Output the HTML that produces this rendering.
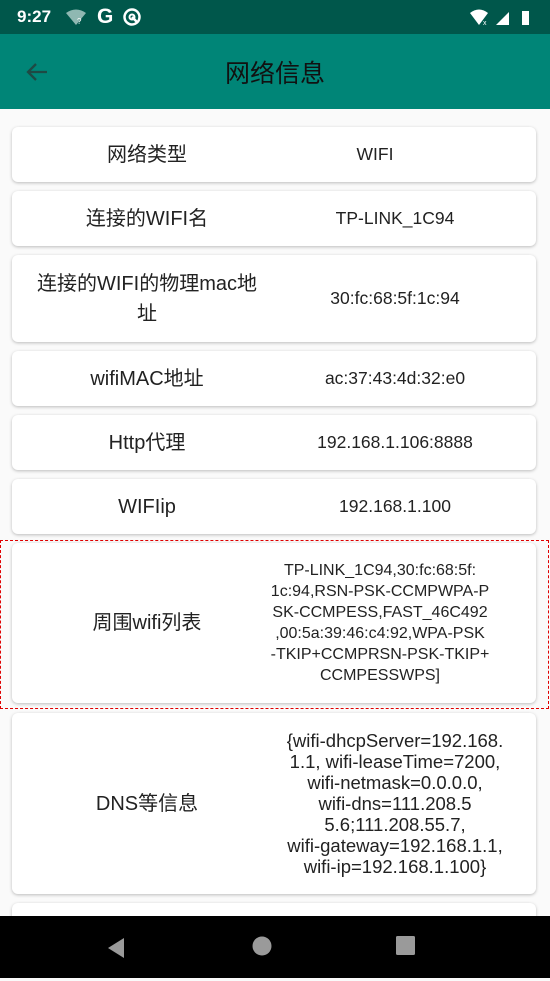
<!DOCTYPE html>
<html><head><meta charset="utf-8">
<style>
*{margin:0;padding:0;box-sizing:border-box}
body{width:550px;height:981px;overflow:hidden;background:#fafafa;font-family:"Liberation Sans","Noto Sans CJK SC",sans-serif;color:#222;position:relative}
.sb{position:absolute;left:0;top:0;width:550px;height:34px;background:#00574b;color:#fff}
.ab{position:absolute;left:0;top:34px;width:550px;height:75px;background:#008577}
.title{position:absolute;left:0;width:550px;top:20px;text-align:center;font-size:25px;color:#111}
.card{position:absolute;left:12px;width:524px;background:#fff;border-radius:6px;box-shadow:0 1px 3px rgba(0,0,0,.25);display:flex;align-items:center}
.l{width:270px;text-align:center;font-size:20px;padding:0 23px;line-height:30px}
.r{width:226px;text-align:center;font-size:17.5px;line-height:21px;white-space:nowrap}
.nav{position:absolute;left:0;top:916px;width:550px;height:62px;background:#000}
</style></head><body>
<div class="sb">
<div style="position:absolute;left:17px;top:7px;font-size:17px;font-weight:bold">9:27</div>
<svg style="position:absolute;left:66px;top:9px" width="20" height="16"><path d="M0 4 Q10 -3 20 4 L10 16Z" fill="#8fb8b2"/><text x="11" y="15" font-size="8" fill="#fff">?</text></svg>
<div style="position:absolute;left:97px;top:5px;font-size:21px;font-weight:bold">G</div>
<svg style="position:absolute;left:122px;top:7px" width="20" height="20"><circle cx="10" cy="10" r="7.5" stroke="#fff" stroke-width="2.5" fill="none"/><circle cx="10" cy="10" r="2.5" stroke="#fff" stroke-width="2" fill="none"/><path d="M10 10 L15 15" stroke="#fff" stroke-width="2.5"/></svg>
<svg style="position:absolute;left:470px;top:9px" width="60" height="17"><path d="M0 4 Q9 -3 18 4 L9 16Z" fill="#fff"/><text x="13" y="16" font-size="7" fill="#fff">x</text><path d="M26 16 L39 3 L39 16Z" fill="#fff"/><rect x="52" y="2" width="7" height="14" fill="#fff"/></svg>
</div>
<div class="ab">
<svg style="position:absolute;left:25px;top:28px" width="24" height="20"><path d="M22 10 H3 M11 2 L3 10 L11 18" stroke="#1e4a44" stroke-width="2.3" fill="none"/></svg>
<div class="title">网络信息</div>
</div>
<div class="card" style="top:127px;height:55px"><div class="l">网络类型</div><div class="r" style="padding-right:40px">WIFI</div></div>
<div class="card" style="top:191px;height:55px"><div class="l">连接的WIFI名</div><div class="r">TP-LINK_1C94</div></div>
<div class="card" style="top:255px;height:87px"><div class="l">连接的WIFI的物理mac地址</div><div class="r">30:fc:68:5f:1c:94</div></div>
<div class="card" style="top:351px;height:55px"><div class="l">wifiMAC地址</div><div class="r">ac:37:43:4d:32:e0</div></div>
<div class="card" style="top:415px;height:55px"><div class="l">Http代理</div><div class="r">192.168.1.106:8888</div></div>
<div class="card" style="top:479px;height:55px"><div class="l">WIFIip</div><div class="r">192.168.1.100</div></div>
<div style="position:absolute;left:0;top:540px;width:549px;height:169px;border:1px dashed #e00000"></div>
<div class="card" style="top:543px;height:160px"><div class="l">周围wifi列表</div><div class="r" style="font-size:16px;position:relative;left:-15px">TP-LINK_1C94,30:fc:68:5f:<br>1c:94,RSN-PSK-CCMPWPA-P<br>SK-CCMPESS,FAST_46C492<br>,00:5a:39:46:c4:92,WPA-PSK<br>-TKIP+CCMPRSN-PSK-TKIP+<br>CCMPESSWPS]</div></div>
<div class="card" style="top:713px;height:181px"><div class="l">DNS等信息</div><div class="r" style="font-size:18.5px">{wifi-dhcpServer=192.168.<br>1.1, wifi-leaseTime=7200,<br>wifi-netmask=0.0.0.0,<br>wifi-dns=111.208.5<br>5.6;111.208.55.7,<br>wifi-gateway=192.168.1.1,<br>wifi-ip=192.168.1.100}</div></div>
<div class="card" style="top:903px;height:60px"></div>
<div class="nav">
<svg style="position:absolute;left:104px;top:20px" width="24" height="24"><path d="M20 2 V22 L4 12Z" fill="#9a9a9a"/></svg>
<svg style="position:absolute;left:250px;top:18px" width="24" height="24"><circle cx="12" cy="12" r="9.5" fill="#9a9a9a"/></svg>
<svg style="position:absolute;left:394px;top:18px" width="24" height="24"><rect x="2" y="2" width="19" height="19" rx="1.5" fill="#9a9a9a"/></svg>
</div>
</body></html>
